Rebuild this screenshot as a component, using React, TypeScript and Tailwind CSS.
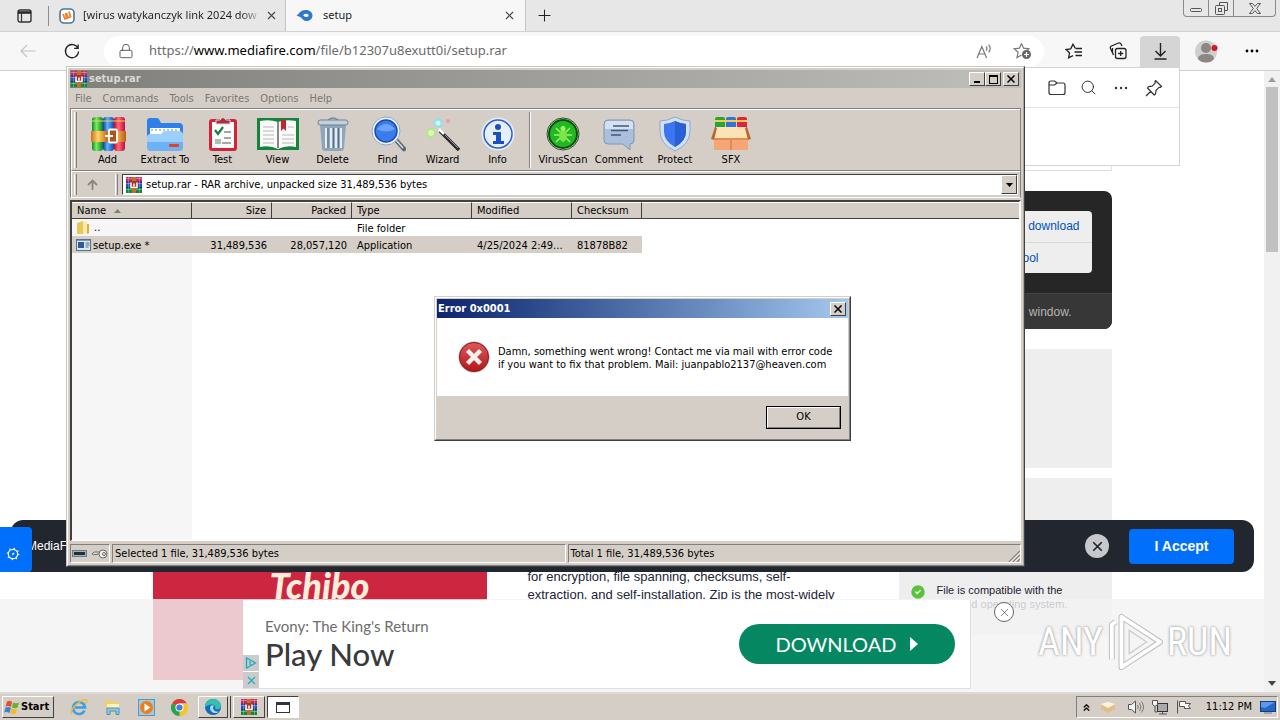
import React from "react";
import { ChevronsUp, CircleCheck, Lock, Plus, Search, X } from "lucide-react";

const raised =
  "border border-t-white border-l-white border-r-[#404040] border-b-[#404040] bg-[#d5cec7]";
const sunken =
  "border border-t-[#808080] border-l-[#808080] border-r-white border-b-white";

/* ---------- shared glyphs ---------- */

function Books() {
  return (
    <svg width="16" height="16" viewBox="0 0 16 16" aria-hidden="true">
      <rect width="16" height="5" fill="#c62a63" />
      <rect y="1" width="16" height="1" fill="#ee6a98" />
      <rect y="5" width="16" height="6" fill="#2a4fc4" />
      <rect y="6" width="16" height="1" fill="#5b8aec" />
      <rect y="11" width="16" height="5" fill="#15873a" />
      <rect y="12" width="16" height="1" fill="#3fc266" />
      <path d="M0 5h16M0 10.500h16" stroke="#101030" strokeWidth="1" opacity=".6" />
      <rect x="6" width="4" height="16" fill="#c0702e" />
      <rect x="4" y="4" width="8" height="8" fill="#a03a1c" />
      <path d="M5 5.500v5h6v-5M8 6.500v3" stroke="#fff" strokeWidth="1.500" fill="none" />
      <path d="M2.500 0v16M13.500 0v16" stroke="#9ed7e6" strokeWidth="1" opacity=".4" />
    </svg>
  );
}

function CloseX({ size = 8 }: { size?: number }) {
  return (
    <svg width={size} height={size} viewBox="0 0 8 8" aria-hidden="true">
      <path d="M.5.5l7 7M7.5.5l-7 7" stroke="#000" strokeWidth="1.5" />
    </svg>
  );
}

/* ---------- browser ---------- */

function TabStrip() {
  return (
    <div className="flex h-8 shrink-0 items-stretch border-b border-[#d2d2d2] bg-[#e7e7e7]">
      <button aria-label="Tab actions" className="flex w-12 items-center justify-center">
        <svg width="15" height="14" viewBox="0 0 15 14" fill="none">
          <rect x="1" y="1" width="13" height="12" rx="2" stroke="#333" strokeWidth="1.4" />
          <path d="M1 3.5h13" stroke="#222" strokeWidth="2.5" />
          <path d="M4.5 3v10" stroke="#333" strokeWidth="1.2" />
        </svg>
      </button>
      <div className="flex w-[238px] items-center border-r border-[#c4c4c4]">
        <span className="h-5 w-px bg-[#8d8d8d]" />
        <svg className="ml-2.5 shrink-0" width="16" height="16" viewBox="0 0 16 16" aria-hidden="true">
          <rect x="1" y="1" width="14" height="14" rx="4" fill="#fff" stroke="#4b7796" strokeWidth="1.6" />
          <path d="M4 6l2 5 1.7-1L6.5 5M7.5 5L9 10l2.5-1.5-1.5-5" fill="none" stroke="#f5822b" strokeWidth="1.8" />
        </svg>
        <span className="ml-2 w-[176px] whitespace-nowrap bg-gradient-to-r from-[#222] from-90% to-[#d0d0d0] bg-clip-text text-[11px] text-transparent">
          [wirus watykanczyk link 2024 dow
        </span>
        <button aria-label="Close tab" className="ml-1 flex w-4 justify-center">
          <X size={13} strokeWidth={2} color="#444" />
        </button>
      </div>
      <div className="flex w-[240px] items-center border-r border-[#c4c4c4] bg-[#f7f7f7] pr-2">
        <svg className="ml-2.5" width="17" height="13" viewBox="0 0 17 13" aria-hidden="true">
          <path d="M.5 6.500C2.500 6 4 1 9.500 1c4.500 0 7 2.500 7 5.500s-2.500 5.500-6 5.500c-3 0-4-2-5.500-3.500C4 7.500 2 7.500.5 6.500z" fill="#2f77cf" />
          <path d="M7 6c1.500-1 3-1.500 4.500-1 1.500.5 1.500 2.500-.5 3C9.500 8.300 8 7.500 7 6z" fill="#f7f7f7" />
        </svg>
        <span className="ml-2.5 flex-1 text-[11px] text-[#222]">setup</span>
        <button aria-label="Close tab" className="flex w-4 justify-center">
          <X size={13} strokeWidth={2} color="#444" />
        </button>
      </div>
      <button aria-label="New tab" className="ml-2 flex w-5 items-center justify-center">
        <Plus size={19} strokeWidth={1.3} color="#222" />
      </button>
      <div className="ml-auto mr-1 flex h-[17px] w-[93px] divide-x divide-[#8a8a8a] rounded-b border border-t-0 border-[#8a8a8a]">
        <button aria-label="Minimize" className="flex w-[25px] items-end justify-center pb-1">
          <svg width="12" height="4" viewBox="0 0 12 4" fill="none">
            <rect x=".5" y=".5" width="11" height="3" rx="1" stroke="#555" />
          </svg>
        </button>
        <button aria-label="Restore" className="flex w-[25px] items-center justify-center">
          <svg width="13" height="13" viewBox="0 0 13 13" fill="none" stroke="#555">
            <path d="M4.500 3.500v-3h8v8h-3" />
            <rect x=".5" y="3.500" width="9" height="9" rx="1" />
            <rect x="3.500" y="6.500" width="3" height="3" />
          </svg>
        </button>
        <button aria-label="Close window" className="flex flex-1 items-center justify-center">
          <svg width="12" height="11" viewBox="0 0 12 11" fill="none" stroke="#555">
            <path d="M.5.5h3L6 3.300 8.500.5h3L7.700 5.500l3.800 5h-3L6 7.700 3.500 10.500h-3l3.800-5z" />
          </svg>
        </button>
      </div>
    </div>
  );
}

function Toolbar() {
  return (
    <div className="flex h-[39px] shrink-0 items-center border-b border-[#cfcfcf] bg-[#f7f7f7]">
      <button aria-label="Back" className="ml-5 flex w-4 justify-center">
        <svg width="16" height="14" viewBox="0 0 16 14" fill="none" stroke="#c4c4c4" strokeWidth="1.200">
          <path d="M15.500 7H1M7 1L1 7l6 6" />
        </svg>
      </button>
      <button aria-label="Refresh" className="ml-7 flex w-4 justify-center">
        <svg width="17" height="17" viewBox="0 0 17 17" fill="none" stroke="#222" strokeWidth="1.400">
          <path d="M14.800 5A7 7 0 1 0 15.500 8.500M15 1v4.200h-4.200" />
        </svg>
      </button>
      <label className="ml-6 mr-5 flex h-[31px] flex-1 items-center rounded-2xl bg-white pl-3.5 pr-3">
        <Lock size={16} strokeWidth={1.400} color="#555" aria-hidden="true" />
        <span className="relative ml-[15px] flex-1 text-[13px]">
          <span aria-hidden="true" className="whitespace-nowrap text-[#6b6b6b]">
            https://<span className="text-black">www.mediafire.com</span>/file/b12307u8exutt0i/setup.rar
          </span>
          <input
            aria-label="Address"
            defaultValue=""
            className="absolute inset-0 w-full bg-transparent outline-none"
          />
        </span>
        <svg className="mr-5" width="17" height="15" viewBox="0 0 17 15" fill="none" stroke="#777" strokeWidth="1.200">
          <path d="M1 14L5.800 2.500 10.600 14M2.600 10h6.400M10 2.500c1.200 1 1.200 3 0 4M12.500.8c2.300 2 2.300 5.500 0 7.500" />
        </svg>
        <svg width="19" height="18" viewBox="0 0 19 18" fill="none">
          <path d="M8.500 1.500l2.100 4.700 5.200.6-2 1.900M8.500 1.500L6.400 6.200 1.200 6.800l3.900 3.500-1.100 5.200 4.500-2.500" stroke="#777" strokeWidth="1.200" />
          <circle cx="13.500" cy="12.500" r="4.500" fill="#666" />
          <path d="M13.500 10v5M11 12.500h5" stroke="#fff" strokeWidth="1.200" />
        </svg>
      </label>
      <button aria-label="Favorites" className="flex w-5 justify-center">
        <svg width="18" height="17" viewBox="0 0 18 17" fill="none" stroke="#222" strokeWidth="1.300">
          <path d="M10.200 5.200L8 1.200 5.700 5.800 1 6.500l3.500 3.300-.9 5L8 12.700M10.500 5.500h6.500M9.500 9h7.500M10.500 12.500h6.500" />
        </svg>
      </button>
      <button aria-label="Collections" className="ml-6 flex w-5 justify-center">
        <svg width="18" height="18" viewBox="0 0 18 18" fill="none" stroke="#222" strokeWidth="1.300">
          <rect x="6.500" y="6.500" width="10.500" height="10" rx="2" />
          <path d="M11.700 9v5M9.200 11.500h5M4.500 13L1.500 6.500c-.5-1 0-2 1-2.500l7-3c1-.4 2 0 2.500 1l1 2M3.500 10.500V6" />
        </svg>
      </button>
      <button aria-label="Downloads" className="ml-3 flex h-[31px] w-10 items-center justify-center rounded-t bg-[#d5d5d5]">
        <svg width="13" height="17" viewBox="0 0 13 17" fill="none" stroke="#222" strokeWidth="1.400">
          <path d="M6.500 0v13M1.500 8l5 5 5-5M.5 16h12" />
        </svg>
      </button>
      <button aria-label="Profile" className="ml-3.5 flex w-6 justify-center">
        <svg width="24" height="23" viewBox="0 0 24 23">
          <circle cx="12" cy="11.500" r="11" fill="#cfcfcb" />
          <circle cx="12" cy="8" r="5" fill="#8b8783" />
          <path d="M4 19c0-4 4-5 8-5s8 1 8 5c-2 2.500-4.500 3.500-8 3.500S6 21.500 4 19z" fill="#8b8783" />
          <circle cx="20.500" cy="8" r="3" fill="#e1131f" />
        </svg>
      </button>
      <button aria-label="More" className="ml-[26px] mr-5 flex w-4 justify-center">
        <svg width="14" height="4" viewBox="0 0 14 4">
          <circle cx="2" cy="2" r="1.400" /><circle cx="7" cy="2" r="1.400" /><circle cx="12" cy="2" r="1.400" />
        </svg>
      </button>
    </div>
  );
}

function DownloadsFlyout() {
  return (
    <div className="absolute right-[100px] top-[67px] h-[99px] w-[360px] border border-[#d4d4d4] bg-white">
      <div className="flex h-10 items-center justify-end gap-3.5 border-b border-[#e2e2e2] pr-4">
        <button aria-label="Open folder">
          <svg width="18" height="16" viewBox="0 0 18 16" fill="none" stroke="#333" strokeWidth="1.200">
            <path d="M1 4.500V3q0-2 2-2h3.500L9 3h6q2 0 2 2v7.500q0 2-2 2H3q-2 0-2-2zM1 5h5.500L9 3" />
          </svg>
        </button>
        <button aria-label="Search downloads"><Search size={17} strokeWidth={1.400} color="#333" /></button>
        <button aria-label="More options" className="flex w-5 justify-center">
          <svg width="14" height="4" viewBox="0 0 14 4" fill="#333">
            <circle cx="2" cy="2" r="1.200" /><circle cx="7" cy="2" r="1.200" /><circle cx="12" cy="2" r="1.200" />
          </svg>
        </button>
        <button aria-label="Pin">
          <svg width="18" height="18" viewBox="0 0 18 18" fill="none" stroke="#333" strokeWidth="1.200" strokeLinejoin="round">
            <path d="M10.500 1.500l6 6-1.300 1-1.200-.2-3 3-.5 3.700-1.300 1L2.500 9l1-1.300 3.700-.5 3-3-.2-1.400zM5.800 12.300L1 17" />
          </svg>
        </button>
      </div>
    </div>
  );
}

function PageContent() {
  return (
    <main className="mx-auto flex h-full w-[959px] flex-col font-['Liberation_Sans',Arial,sans-serif]">
      <div className="h-[100px] shrink-0 border border-t-0 border-[#dedede]" />
      <section className="mt-5 flex h-[138px] shrink-0 flex-col overflow-hidden rounded-lg bg-[#262626]">
        <div className="flex flex-1 justify-end p-5">
          <div className="flex w-[300px] flex-col divide-y divide-[#d8d8d8] overflow-hidden rounded bg-[#eee] text-xs text-[#0053b8]">
            <a href="#download" className="flex flex-1 items-center justify-end pr-3">download</a>
            <a href="#tool" className="flex flex-1 items-center justify-end pr-[53px]">tool</a>
          </div>
        </div>
        <div className="flex h-9 items-center justify-end border-t border-[#444] bg-[#373737] pr-10 text-xs text-[#b4b4b4]">
          window.
        </div>
      </section>
      <section className="mt-5 flex min-h-0 flex-1 items-start">
        <div className="flex h-[331px] w-[334px] flex-col justify-end bg-[#cd2640]">
          <div className="h-[107px] text-center font-['Lato',sans-serif] text-[36px] leading-[25px] font-black text-[#fbeedd] italic">
            Tchibo
          </div>
        </div>
        <p className="ml-[41px] mt-[219px] w-[340px] text-[13px] leading-[18px] text-[#222436]">
          for encryption, file spanning, checksums, self-
          <br />
          extraction, and self-installation. Zip is the most-widely
        </p>
        <div className="ml-auto flex w-[213px] flex-col gap-2.5">
          <div className="h-[119px] bg-[#eee]" />
          <div className="flex h-[157px] items-end gap-2.5 bg-[#eee] pb-6 pl-2.5">
            <CircleCheck size={18} fill="#57c43c" color="#eee" strokeWidth={2} className="mb-2.5 shrink-0" />
            <p className="text-[11px] leading-[14px] text-[#222436]">
              File is compatible with the
              <br />
              selected operating system.
            </p>
          </div>
        </div>
      </section>
    </main>
  );
}

function CookieBanner() {
  return (
    <div className="absolute bottom-[120px] left-[11px] right-[10px] flex h-[52px] items-center rounded-xl bg-[#22272f] pl-4 pr-5 font-['Liberation_Sans',Arial,sans-serif]">
      <span className="flex-1 text-xs text-white">MediaFire</span>
      <button aria-label="Dismiss" className="mr-5 flex size-6 items-center justify-center rounded-full bg-[#c6c8cc]">
        <X size={15} strokeWidth={2.800} color="#22272f" />
      </button>
      <button className="h-[35px] w-[105px] rounded bg-[#006ffb] text-sm font-bold text-white">I Accept</button>
    </div>
  );
}

function BottomAd() {
  return (
    <div className="absolute inset-x-0 bottom-0 h-[93px] bg-[#f2f2f2]/80 pt-px font-['Lato',sans-serif]">
      <div className="ml-[243px] flex h-[89px] w-[728px] items-center border-b border-r border-[#dedede] bg-white">
        <div className="flex flex-col gap-px self-end">
          <a href="#adchoices" aria-label="Ad choices" className="flex size-4 items-center justify-center bg-[#c9cccb]">
            <svg width="12" height="12" viewBox="0 0 12 12" fill="none" stroke="#20a8bd" strokeWidth="1.300">
              <path d="M1.500 1v10L10.500 6zM5 4v4" />
            </svg>
          </a>
          <button aria-label="Close ad" className="flex size-4 items-center justify-center bg-[#c9cccb]">
            <X size={13} color="#20a8bd" strokeWidth={2} />
          </button>
        </div>
        <div className="ml-1.5 flex-1">
          <div className="text-[15px] leading-5 text-[#6d6d6d]">Evony: The King's Return</div>
          <div className="text-[31px] leading-9 font-medium text-[#3a3a3a]">Play Now</div>
        </div>
        <a
          href="#play"
          className="mr-[15px] flex h-10 w-[216px] items-center justify-center gap-3.5 rounded-full bg-[#058862] text-xl text-white"
        >
          DOWNLOAD
          <svg width="8" height="14" viewBox="0 0 8 14" fill="#fff" aria-hidden="true"><path d="M0 0l8 7-8 7z" /></svg>
        </a>
      </div>
      <button
        aria-label="Close banner"
        className="absolute left-[994px] top-[3px] flex size-5 items-center justify-center rounded-full border border-[#666] bg-white"
      >
        <X size={13} strokeWidth={1.200} color="#444" />
      </button>
    </div>
  );
}

function Watermark() {
  return (
    <div className="pointer-events-none absolute bottom-[18px] right-8 flex h-16 w-[194px] items-center justify-between font-['Roboto_Condensed','Open_Sans_Condensed','Noto_Sans_Condensed','DejaVu_Sans_Condensed',sans-serif] text-[38px] leading-none text-white [text-shadow:0_0_3px_#a0a0a0,0_0_2px_#b8b8b8]">
      ANY
      <svg className="shrink-0" width="58" height="64" viewBox="0 0 60 64" fill="none" aria-hidden="true">
        <path d="M6 50V14l4-3M16 6v52l40-26z" stroke="#bdbdbd" strokeWidth="6" strokeLinejoin="round" />
        <path d="M6 50V14l4-3M16 6v52l40-26z" stroke="#fff" strokeWidth="4" strokeLinejoin="round" />
        <path d="M24 20v24l18-12z" stroke="#cfcfcf" strokeWidth="1.500" />
      </svg>
      RUN
    </div>
  );
}

function Viewport() {
  return (
    <div className="flex min-h-0 flex-1">
      <div className="relative min-w-0 flex-1 overflow-hidden bg-white">
        <PageContent />
        <CookieBanner />
        <button
          aria-label="Privacy settings"
          className="absolute bottom-[120px] left-0 flex h-[45px] w-8 items-center justify-start rounded-r bg-[#006ffb] pl-1.5 pt-2"
        >
          <svg width="14" height="14" viewBox="0 0 14 14" fill="none" stroke="#fff">
            <circle cx="7" cy="7" r="4.700" strokeWidth="1.200" />
            <circle cx="7" cy="7" r="5.700" strokeWidth="1.200" strokeDasharray="1.200 3.277" />
            <path d="M6.300 7.700L8 6" strokeWidth="1.400" />
          </svg>
        </button>
        <BottomAd />
        <Watermark />
      </div>
      <div className="flex w-4 flex-col items-center bg-[#f1f1f1]">
        <span className="flex h-4 items-center">
          <svg width="8" height="5" viewBox="0 0 8 5" fill="#a0a0a0"><path d="M0 5l4-5 4 5z" /></svg>
        </span>
        <span className="h-[165px] w-3 bg-[#c1c1c1]" />
        <span className="mt-auto flex h-[18px] items-center">
          <svg width="8" height="5" viewBox="0 0 8 5" fill="#444"><path d="M0 0h8L4 5z" /></svg>
        </span>
      </div>
    </div>
  );
}

/* ---------- archive window ---------- */

function AddIcon() {
  return (
    <svg width="36" height="36" viewBox="0 0 36 36">
      <defs>
        <linearGradient id="bg"><stop stopColor="#0b8d25" /><stop offset=".4" stopColor="#7bec5e" /><stop offset="1" stopColor="#0b7d25" /></linearGradient>
        <linearGradient id="bb"><stop stopColor="#0d3fa4" /><stop offset=".4" stopColor="#5eb2fa" /><stop offset="1" stopColor="#1446b4" /></linearGradient>
        <linearGradient id="br"><stop stopColor="#c30a22" /><stop offset=".4" stopColor="#ff6a76" /><stop offset="1" stopColor="#c30a42" /></linearGradient>
        <linearGradient id="belt"><stop stopColor="#c9701c" /><stop offset=".2" stopColor="#ffd568" /><stop offset=".45" stopColor="#c9701c" /><stop offset=".7" stopColor="#ffc258" /><stop offset="1" stopColor="#b85e14" /></linearGradient>
      </defs>
      <rect x="2" y="1" width="11" height="34" rx="3" fill="url(#bg)" />
      <rect x="13" y="1" width="11" height="34" rx="3" fill="url(#bb)" />
      <rect x="24" y="1" width="11" height="34" rx="3" fill="url(#br)" />
      <path d="M2 5h33" stroke="#f1d252" strokeWidth="1.200" />
      <rect x="1" y="15" width="35" height="11" rx="1" fill="url(#belt)" />
      <rect x="19" y="13.500" width="8" height="13" rx="1" fill="#a8581a" stroke="#fff" strokeWidth="1.800" />
      <path d="M15 20h8" stroke="#fff" strokeWidth="2" />
    </svg>
  );
}
function ExtractIcon() {
  return (
    <svg width="38" height="36" viewBox="0 0 38 36">
      <path d="M1 5q0-3 3-3h7q2 0 3 3l1 2h18q4 0 4 4v20H1z" fill="#2f80ea" />
      <path d="M4 12h30v10H4z" fill="#fff" />
      <path d="M5 14h28" stroke="#b4c6dc" strokeDasharray="2 2" strokeWidth="2" />
      <path d="M1 21q0-3 4-3h10l3-3h15q4 0 4 4v12q0 4-4 4H5q-4 0-4-4z" fill="#9ccffc" />
      <path d="M1 26h36v5q0 4-4 4H5q-4 0-4-4z" fill="#4f9cf2" opacity=".6" />
      <rect x="23" y="28" width="10" height="3" rx="1" fill="#e4402c" />
    </svg>
  );
}
function TestIcon() {
  return (
    <svg width="30" height="36" viewBox="0 0 30 36">
      <rect x="1" y="3" width="28" height="32" rx="3" fill="#d1243a" />
      <path d="M4 6h22v26H4z" fill="#fbfbfb" />
      <path d="M8 8V4h4q3-5 6 0h4v4z" fill="#a8303f" stroke="#d8d8d8" />
      <path d="M7 14l3 4 5-7" stroke="#15803d" strokeWidth="2.200" fill="none" />
      <path d="M16 16h7M16 22h7M14 27h9" stroke="#8a8a8a" strokeWidth="1.500" />
      <path d="M7 23h6v5H7z" fill="#aebfae" />
    </svg>
  );
}
function ViewIcon() {
  return (
    <svg width="42" height="34" viewBox="0 0 42 34">
      <path d="M0 1h42v32H0z" fill="#14833c" />
      <path d="M3 4q10-2 18 1 8-3 18-1v26q-10-2-18 2-8-4-18-2z" fill="#fafafa" />
      <path d="M21 5v26" stroke="#888" strokeWidth="2" />
      <path d="M6 10h11M6 14h11M6 18h11M6 22h11M6 26h11M31 10h6M25 18h12M25 22h12M25 26h12" stroke="#b8b8b8" />
      <path d="M24 3h5v11l-2.500-2.500L24 14z" fill="#c8202f" />
    </svg>
  );
}
function DeleteIcon() {
  return (
    <svg width="32" height="36" viewBox="0 0 32 36">
      <path d="M11 4q5-4 10 0" stroke="#7b8a99" strokeWidth="1.500" fill="none" />
      <path d="M3 9h26l-2 23q0 3-3 3H8q-3 0-3-3z" fill="#8fa5ba" />
      <path d="M9 12v20M14 12v20M19 12v20M24 12v20" stroke="#e4edf5" strokeWidth="2" />
      <path d="M11 12v20M16.500 12v20M21.500 12v20" stroke="#5b6f84" />
      <rect x="1" y="4" width="30" height="5" rx="2.500" fill="#c3d0dc" stroke="#6f8092" />
    </svg>
  );
}
function FindIcon() {
  return (
    <svg width="36" height="36" viewBox="0 0 36 36">
      <path d="M26 24l8 9" stroke="#5f6a78" strokeWidth="4.500" strokeLinecap="round" />
      <path d="M26 24l7 8" stroke="#d5dce5" strokeWidth="1.500" />
      <circle cx="16" cy="15" r="14" fill="#eef5ff" stroke="#8ea8cf" />
      <circle cx="16" cy="15" r="11" fill="#3a7cec" stroke="#1c4bb0" strokeWidth="1.500" />
      <path d="M7 13q9-10 18 0-9 5-18 0z" fill="#8dbcff" opacity=".6" />
    </svg>
  );
}
function WizardIcon() {
  return (
    <svg width="36" height="36" viewBox="0 0 36 36">
      <path d="M15 15l19 19" stroke="#2a2a2a" strokeWidth="3.500" />
      <path d="M14 13l5 5" stroke="#fff" strokeWidth="2.500" />
      <path d="M20 19l13 13" stroke="#9b9b9b" strokeWidth="1" />
      <circle cx="6" cy="17" r="5" fill="#a5ef6a" opacity=".6" />
      <circle cx="6" cy="17" r="3" fill="#d4ffa8" />
      <circle cx="13" cy="7" r="5" fill="#7fe4ee" opacity=".6" />
      <circle cx="13" cy="7" r="2.500" fill="#c2fcff" />
      <circle cx="23" cy="5" r="2" fill="#f08b8b" opacity=".7" />
    </svg>
  );
}
function InfoIcon() {
  return (
    <svg width="34" height="34" viewBox="0 0 34 34">
      <circle cx="17" cy="17" r="16.500" fill="#e3ecfa" />
      <circle cx="17" cy="17" r="14" fill="#e6effd" stroke="#2d5fc4" strokeWidth="1.500" />
      <circle cx="17" cy="10" r="3" fill="#1d4fbe" />
      <path d="M12 15h8v9h3v3H12v-3h3v-6h-3z" fill="#1d4fbe" />
    </svg>
  );
}
function VirusIcon() {
  return (
    <svg width="34" height="34" viewBox="0 0 34 34">
      <circle cx="17" cy="17" r="16" fill="#dfe6df" stroke="#2c4a2c" />
      <circle cx="17" cy="17" r="14" fill="#22b822" stroke="#0a520c" strokeWidth="2" />
      <path d="M17 9v16M10 11l4 4M24 11l-4 4M8 18h5M26 18h-5M10 25l4-4M24 25l-4-4" stroke="#9df26a" strokeWidth="1.600" />
      <ellipse cx="17" cy="18.500" rx="4" ry="6" fill="#7fe34a" />
      <circle cx="17" cy="11.500" r="2.500" fill="#9df26a" />
    </svg>
  );
}
function CommentIcon() {
  return (
    <svg width="34" height="34" viewBox="0 0 34 34">
      <path d="M6 3h22q4 0 4 4v16q0 4-4 4v6l-7-6H6q-4 0-4-4V7q0-4 4-4z" fill="#a9bfdc" stroke="#8296b2" />
      <path d="M6 4h22q3 0 3 3v5H3V7q0-3 3-3z" fill="#d5e1f1" />
      <path d="M11 9h16M9 13.500h17M9 18h10" stroke="#3f5a7c" strokeWidth="1.500" />
    </svg>
  );
}
function ShieldIcon() {
  return (
    <svg width="32" height="36" viewBox="0 0 32 36">
      <path d="M16 1q8 4 15 4v10q0 13-15 20Q1 28 1 15V5q7 0 15-4z" fill="#d3e1f6" stroke="#8ea6cc" />
      <path d="M16 5q6 3 11 3v8q0 9-11 15Q5 25 5 16V8q5 0 11-3z" fill="#3b76ee" />
      <path d="M16 5q6 3 11 3v8q0 9-11 15z" fill="#2a60d4" />
    </svg>
  );
}
function SfxIcon() {
  return (
    <svg width="40" height="36" viewBox="0 0 40 36">
      <rect x="4" y="1" width="10" height="14" rx="2" fill="#27a53a" />
      <rect x="15" y="1" width="10" height="14" rx="2" fill="#2d74e0" />
      <rect x="26" y="1" width="10" height="14" rx="2" fill="#dc2440" />
      <path d="M4 5h32" stroke="#f4cf45" strokeWidth="2" />
      <path d="M3 17h34v17H3z" fill="#f4a774" />
      <path d="M20 23v11" stroke="#c9703a" />
      <path d="M5 11h30l2 11H3z" fill="#fde3b4" />
      <path d="M4 11L0 23l3 1 3-12zM36 11l4 12-3 1-3-12z" fill="#b96633" />
      <path d="M3 22h34v2H3z" fill="#e08c52" />
    </svg>
  );
}

type Tool = { label: string; icon: React.ReactNode; width: string };

const archiveTools: Tool[] = [
  { label: "Add", icon: <AddIcon />, width: "w-[55px]" },
  { label: "Extract To", icon: <ExtractIcon />, width: "w-[60px]" },
  { label: "Test", icon: <TestIcon />, width: "w-[55px]" },
  { label: "View", icon: <ViewIcon />, width: "w-[55px]" },
  { label: "Delete", icon: <DeleteIcon />, width: "w-[55px]" },
  { label: "Find", icon: <FindIcon />, width: "w-[55px]" },
  { label: "Wizard", icon: <WizardIcon />, width: "w-[55px]" },
  { label: "Info", icon: <InfoIcon />, width: "w-[55px]" },
];
const extraTools: Tool[] = [
  { label: "VirusScan", icon: <VirusIcon />, width: "w-[56px]" },
  { label: "Comment", icon: <CommentIcon />, width: "w-[56px]" },
  { label: "Protect", icon: <ShieldIcon />, width: "w-[56px]" },
  { label: "SFX", icon: <SfxIcon />, width: "w-[56px]" },
];

function ToolButton({ label, icon, width }: Tool) {
  return (
    <button className={`flex shrink-0 flex-col items-center whitespace-nowrap ${width}`}>
      <span className="flex h-9 items-center justify-center">{icon}</span>
      <span className="leading-4">{label}</span>
    </button>
  );
}

const Grip = () => <span className="w-[3px] self-stretch border-l border-r border-l-white border-r-[#808080]" />;

function FileTable() {
  const th =
    "h-[17px] border-r border-b border-r-[#404040] border-b-[#404040] border-t border-t-white bg-[#d5cec7] px-[5px] pt-px pb-0 font-normal";
  const picked = "bg-[#d5cec7] px-[5px] pt-0.5 pb-0";
  return (
    <div className="relative flex-1 overflow-hidden border-2 border-b border-[#404040] border-r-white border-b-white bg-white">
      <table className="w-full table-fixed border-separate border-spacing-0 leading-[14px]">
        <colgroup>
          <col className="w-[120px]" />
          <col className="w-20" />
          <col className="w-20" />
          <col className="w-[120px]" />
          <col className="w-[100px]" />
          <col className="w-[70px]" />
          <col />
        </colgroup>
        <thead>
          <tr>
            <th className={`${th} text-left`}>
              <span className="flex items-center gap-2">
                Name
                <svg width="7" height="4" viewBox="0 0 7 4" fill="#808080"><path d="M0 4L3.500 0 7 4z" /></svg>
              </span>
            </th>
            <th className={`${th} text-right`}>Size</th>
            <th className={`${th} text-right`}>Packed</th>
            <th className={`${th} text-left`}>Type</th>
            <th className={`${th} text-left`}>Modified</th>
            <th className={`${th} text-left`}>Checksum</th>
            <td className="border-b border-t border-b-[#404040] border-t-white bg-[#d5cec7] p-0" />
          </tr>
        </thead>
        <tbody className="whitespace-nowrap">
          <tr className="h-[17px]">
            <td className="bg-[#f6f6f6] py-0 pl-1">
              <span className="flex h-[17px] items-center gap-1">
                <svg width="14" height="15" viewBox="0 0 14 15" aria-hidden="true">
                  <path d="M1 3l6-2v13H1z" fill="#e9c65b" />
                  <path d="M7 1l4 1v11l-4 1z" fill="#fbeaa5" />
                  <path d="M11 4h2v9l-2 1z" fill="#d8b044" />
                </svg>
                ..
              </span>
            </td>
            <td /><td />
            <td className="px-[5px] pt-0.5 pb-0">File folder</td>
            <td /><td /><td />
          </tr>
          <tr className="h-[17px]">
            <td className="bg-[#d5cec7] py-0 pl-1">
              <span className="flex h-[17px] items-center gap-0.5">
                <svg width="15" height="12" viewBox="0 0 15 12" aria-hidden="true">
                  <rect x=".5" y=".5" width="14" height="11" fill="#dce7f2" stroke="#56708d" />
                  <rect x="2" y="3" width="6" height="6" fill="#2c5a96" />
                  <path d="M1 1.500h13" stroke="#7f9cc0" />
                  <path d="M9.500 4h4M9.500 6h4M9.500 8h3" stroke="#56708d" />
                </svg>
                <span className="pt-0.5">setup.exe *</span>
              </span>
            </td>
            <td className={`${picked} text-right`}>31,489,536</td>
            <td className={`${picked} text-right`}>28,057,120</td>
            <td className={picked}>Application</td>
            <td className={picked}>4/25/2024 2:49...</td>
            <td className={picked}>81878B82</td>
            <td />
          </tr>
        </tbody>
      </table>
      <div className="h-full w-[120px] bg-[#f6f6f6]" />
    </div>
  );
}

function ArchiveWindow() {
  return (
    <div className="absolute left-[66px] top-[66px] flex h-[501px] w-[959px] flex-col border border-[#c9c6c0] border-r-[#404040] border-b-[#404040] bg-[#d5cec7]">
      <div className="flex min-h-0 flex-1 flex-col border border-white border-r-[#a8a49c] border-b-[#808080] p-0.5">
        <div className="flex h-[18px] shrink-0 items-center gap-0.5 bg-gradient-to-r from-[#7f7f7c] to-[#bfc0bb] pl-px pr-0.5">
          <Books />
          <h1 className="flex-1 pt-px text-[11px] font-bold text-[#dcd8d2]">setup.rar</h1>
          <div className="flex">
            <button aria-label="Minimize" className={`flex h-3.5 w-4 items-end justify-center pb-0.5 ${raised}`}>
              <span className="h-0.5 w-1.5 bg-black" />
            </button>
            <button aria-label="Maximize" className={`flex h-3.5 w-4 items-center justify-center ${raised}`}>
              <span className="h-[9px] w-[9px] border border-t-2 border-black" />
            </button>
          </div>
          <button aria-label="Close" className={`flex h-3.5 w-4 items-center justify-center ${raised}`}>
            <CloseX />
          </button>
        </div>
        <nav className="flex h-5 shrink-0 items-center gap-[11px] pl-[5px] pt-0.5 text-[#7c7772]">
          {["File", "Commands", "Tools", "Favorites", "Options", "Help"].map((m) => (
            <button key={m}>{m}</button>
          ))}
        </nav>
        <div className="mb-0.5 flex h-[90px] shrink-0 flex-col border border-[#808080] border-l-[#808080] border-b-white">
          <div className="flex h-[62px] border-b border-l border-t border-b-[#808080] border-l-white border-t-white py-0.5 pl-0.5">
            <Grip />
            <div className="flex pl-[3px] pt-1">
              {archiveTools.map((t) => <ToolButton key={t.label} {...t} />)}
            </div>
            <span className="mx-1 w-0.5 border-l border-r border-l-[#808080] border-r-white" />
            <div className="flex pt-1">
              {extraTools.map((t) => <ToolButton key={t.label} {...t} />)}
            </div>
          </div>
          <div className="flex flex-1 items-center border-l border-t border-white py-0.5 pl-0.5 pr-0.5">
            <Grip />
            <button aria-label="Up one level" className="flex w-[30px] justify-center">
              <svg width="11" height="11" viewBox="0 0 11 11" fill="none" stroke="#8a857e" strokeWidth="1.800">
                <path d="M5.500 11V1.500M1 6l4.500-4.500L10 6" />
              </svg>
            </button>
            <span className="w-2" />
            <Grip />
            <div className="ml-1 flex h-[21px] flex-1 items-center border border-[#404040] border-b-white border-r-white bg-white pl-[3px]">
              <Books />
              <span className="ml-1 flex-1 pt-px">setup.rar - RAR archive, unpacked size 31,489,536 bytes</span>
              <button aria-label="Show paths" className={`flex h-full w-4 items-center justify-center ${raised}`}>
                <svg width="7" height="4" viewBox="0 0 7 4"><path d="M0 0h7L3.500 4z" /></svg>
              </button>
            </div>
          </div>
        </div>
        <FileTable />
        <div className="mt-[3px] flex h-[19px] shrink-0 items-stretch gap-0.5">
          <span className={`flex w-10 items-center justify-center gap-1 ${sunken}`}>
            <svg width="15" height="7" viewBox="0 0 15 7" aria-hidden="true">
              <rect x=".5" y=".5" width="14" height="6" fill="#9db0bb" stroke="#6d7a83" />
              <rect x="2" y="2" width="11" height="3" fill="#1f2f38" />
            </svg>
            <svg width="17" height="10" viewBox="0 0 17 10" fill="none" stroke="#6d6d6d" aria-hidden="true">
              <path d="M8 3H3L1 5l2 1 1-1 1 1 1-1h2" fill="#ddd" />
              <circle cx="12" cy="5" r="4" fill="#eee" />
              <circle cx="13" cy="5" r="1.500" />
            </svg>
          </span>
          <span className={`flex flex-1 items-center pl-0.5 pt-px ${sunken}`}>Selected 1 file, 31,489,536 bytes</span>
          <span className={`flex flex-1 items-center pl-0.5 pt-px ${sunken}`}>
            <span className="flex-1">Total 1 file, 31,489,536 bytes</span>
            <svg className="self-end" width="12" height="12" viewBox="0 0 12 12" aria-hidden="true">
              <path d="M12 1L1 12M12 5l-7 7M12 9l-3 3" stroke="#808080" strokeWidth="1.300" />
              <path d="M12 2.500L2.500 12M12 6.500L6.500 12" stroke="#fff" />
            </svg>
          </span>
        </div>
      </div>
    </div>
  );
}

/* ---------- error dialog ---------- */

function ErrorDialog() {
  return (
    <div
      role="alertdialog"
      aria-labelledby="error-title"
      className="absolute left-[434px] top-[296px] w-[417px] border border-[#d5cec7] border-r-[#404040] border-b-[#404040] bg-[#d5cec7]"
    >
      <div className="border border-white border-r-[#808080] border-b-[#808080] p-px">
        <div className="flex h-[19px] items-center bg-gradient-to-r from-[#0d246c] to-[#a4c8ee] pl-px pr-0.5">
          <h2 id="error-title" className="flex-1 pt-px text-[11px] font-bold text-white">Error 0x0001</h2>
          <button aria-label="Close" className={`flex h-3.5 w-4 items-center justify-center ${raised}`}>
            <CloseX />
          </button>
        </div>
        <div className="flex h-[78px] items-center gap-2 bg-white pl-[21px]">
          <svg width="32" height="32" viewBox="0 0 32 32" aria-hidden="true">
            <defs>
              <linearGradient id="err" x2="0" y2="1"><stop stopColor="#dc5a5c" /><stop offset="1" stopColor="#b3151b" /></linearGradient>
            </defs>
            <circle cx="16" cy="16" r="15.500" fill="#b9a19e" />
            <circle cx="16" cy="16" r="14.500" fill="url(#err)" stroke="#8f1a1e" strokeWidth="1" />
            <path d="M9.500 9.500l13 13M22.500 9.500l-13 13" stroke="#f7f0ea" strokeWidth="4.500" />
          </svg>
          <p className="whitespace-nowrap pt-0.5 leading-[13px]">
            Damn, something went wrong! Contact me via mail with error code
            <br />
            if you want to fix that problem. Mail: juanpablo2137@heaven.com
          </p>
        </div>
        <div className="flex h-[42px] items-center justify-end pr-[7px]">
          <button className="h-[23px] w-[75px] border border-black">
            <span className={`flex h-full items-center justify-center border-b-[#808080] border-r-[#808080] ${raised}`}>OK</span>
          </button>
        </div>
      </div>
    </div>
  );
}

/* ---------- taskbar ---------- */

function Edge() {
  return (
    <svg width="18" height="18" viewBox="0 0 18 18" aria-hidden="true">
      <circle cx="9" cy="9" r="8" fill="#1668bd" />
      <path d="M1 9c0-5 3.500-8 8-8s8 3 8 6.500S13.500 12 11 11c1-2 0-4.500-3-4.500S2.500 8 1 9z" fill="#35bfae" />
      <path d="M6.500 8c-1.500 3 .5 6.500 4 7 2 .2 4-.5 5-1.500-2 .5-5 0-6-2s0-3 .5-3.500-2-1.500-3.500 0z" fill="#9fdcf5" />
    </svg>
  );
}

function Taskbar() {
  return (
    <footer className="relative flex h-7 shrink-0 items-center border-t-2 border-[#dedbd5] bg-[#d5cec7] pl-0.5 pr-0.5">
      <button className={`flex h-[22px] w-[52px] items-center gap-px pl-px font-bold ${raised}`}>
        <svg width="16" height="15" viewBox="0 0 16 15" aria-hidden="true">
          <path d="M3 1.500q3-1.500 5 .5L7 7Q4.500 5.500 1.500 6.500z" fill="#e5502b" />
          <path d="M9 2.500q3 1.500 6 0l-1.500 5q-3 1.500-5.500 0z" fill="#63b32e" />
          <path d="M1.500 7.500q3-1.200 5.500.5L5.500 13Q3 11.500.2 12.500z" fill="#3c82d8" />
          <path d="M7.800 8.500q3 1.500 5.500.2l-1.500 4.800q-2.800 1.200-5.500 0z" fill="#f4bb26" />
        </svg>
        Start
      </button>
      <div className="ml-4 flex items-center gap-4">
        <a href="#ie" aria-label="Internet Explorer">
          <svg width="18" height="18" viewBox="0 0 18 18" fill="none">
            <path d="M14.500 12.500A6 6 0 1 1 15 9.500H5" stroke="#3f9fe0" strokeWidth="2.600" />
            <path d="M1.500 16.500C-1 12 9 2 16 1.500c1.500 1 .5 3-.5 4.500" stroke="#e8bd3f" strokeWidth="1.400" />
          </svg>
        </a>
        <a href="#explorer" aria-label="Explorer">
          <svg width="18" height="16" viewBox="0 0 18 16">
            <path d="M1 2l5-1 1 2h8v11H2z" fill="#f0d067" />
            <path d="M3 5h12v7H3z" fill="#fdf2b8" />
            <path d="M3 15.500V9h12v6.500h-3V12H6v3.500z" fill="#8cc6ea" stroke="#4a90c2" />
          </svg>
        </a>
        <a href="#player" aria-label="Media player">
          <svg width="17" height="17" viewBox="0 0 17 17">
            <rect x=".5" y=".5" width="16" height="16" fill="#9ccbe8" stroke="#5c95bd" />
            <circle cx="8.500" cy="8.500" r="6.500" fill="#ee7d16" />
            <path d="M6.500 4.500v8l6-4z" fill="#fff" />
          </svg>
        </a>
        <a href="#chrome" aria-label="Chrome">
          <svg width="17" height="17" viewBox="0 0 18 18">
            <path d="M9 9L1.200 4.500A9 9 0 0 1 16.800 4.500H9z" fill="#e33b2e" />
            <path d="M9 9L16.800 4.500A9 9 0 0 1 9 18z" fill="#fcc31e" />
            <path d="M9 9v9A9 9 0 0 1 1.200 4.500z" fill="#2ba24c" />
            <circle cx="9" cy="9" r="4.300" fill="#fff" />
            <circle cx="9" cy="9" r="3.300" fill="#3f7de8" />
          </svg>
        </a>
      </div>
      <div className="ml-2.5 flex items-center gap-0.5">
        <div className="flex border-r border-[#404040] pr-0.5">
          <button aria-label="Edge" className={`flex h-[22px] w-[30px] items-center justify-center ${raised}`}><Edge /></button>
        </div>
        <button aria-label="setup.rar" className={`flex h-[22px] w-8 items-center justify-center ${raised}`}><Books /></button>
        <button
          aria-label="Error 0x0001"
          className="flex h-[22px] w-8 items-center justify-center border border-[#404040] border-b-white border-r-white bg-white"
        >
          <span className="h-[11px] w-3.5 border border-t-[3px] border-[#333]" />
        </button>
      </div>
      <div className={`ml-auto flex h-[22px] w-[202px] items-center pl-1 ${sunken}`}>
        <button aria-label="Show hidden icons"><ChevronsUp size={11} strokeWidth={3} color="#111" /></button>
        <svg className="ml-2" width="16" height="13" viewBox="0 0 16 13" aria-hidden="true">
          <path d="M1 4l7 3 7-3v4l-7 4-7-4z" fill="#e2bd83" />
          <path d="M1 3l7-2 7 2-7 4z" fill="#fdf3d8" />
        </svg>
        <svg className="ml-3" width="17" height="14" viewBox="0 0 17 14" fill="none" stroke="#555" aria-hidden="true">
          <path d="M.5 4.500h3l4-3.500v12l-4-3.500h-3z" fill="#f5f5f5" />
          <path d="M9.500 5q1.500 2 0 4M11.500 3q3 4 0 8M13.500 1.500q4 5.500 0 11" stroke="#777" />
        </svg>
        <svg className="ml-[7px]" width="17" height="15" viewBox="0 0 17 15" fill="none" stroke="#555" aria-hidden="true">
          <rect x="5.500" y="3.500" width="10" height="8" fill="#aaa" stroke="#333" />
          <path d="M7 14h8M10.500 12v2M3 6v6h2" />
          <path d="M.5.5h5v4L3 6.500.5 4.500z" fill="#f5f5f5" />
        </svg>
        <svg className="ml-[7px]" width="16" height="14" viewBox="0 0 16 14" fill="#f8f8f8" stroke="#555" aria-hidden="true">
          <path d="M1.500.5v13M3.500 1.500h6v2h5l-2 2.500 2 2.500h-6v-2h-5z" />
        </svg>
        <time className="ml-auto whitespace-nowrap">11:12 PM</time>
        <svg className="ml-2 mr-px" width="16" height="13" viewBox="0 0 16 13" aria-label="Show desktop">
          <rect x=".5" y=".5" width="15" height="10" fill="#2467c5" stroke="#163d7c" />
          <path d="M1 1h14L5 7 1 6z" fill="#5a9be8" />
          <path d="M4 12h8" stroke="#6b7b90" />
        </svg>
      </div>
    </footer>
  );
}

export default function App() {
  return (
    <div className="relative flex h-screen flex-col overflow-hidden bg-white font-['DejaVu_Sans_Condensed','Noto_Sans',sans-serif] text-[11px] text-black">
      <div className="flex min-h-0 flex-1 flex-col font-['Noto_Sans',sans-serif]">
        <TabStrip />
        <Toolbar />
        <Viewport />
      </div>
      <Taskbar />
      <DownloadsFlyout />
      <ArchiveWindow />
      <ErrorDialog />
    </div>
  );
}
